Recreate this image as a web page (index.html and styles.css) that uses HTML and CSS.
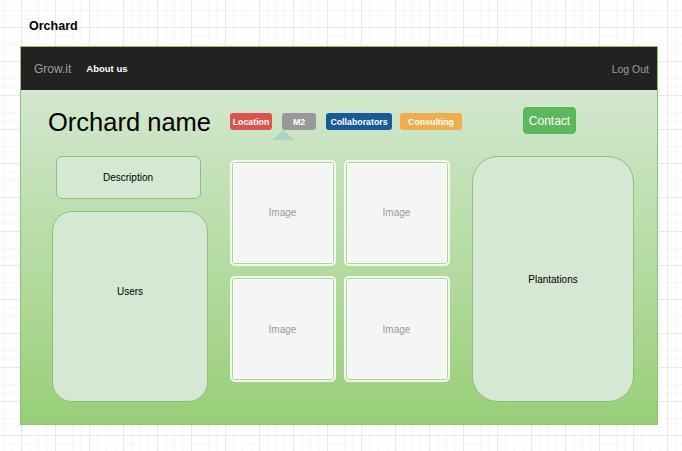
FILE: index.html
```html
<!DOCTYPE html>
<html lang="en">
<head>
<meta charset="utf-8">
<title>Orchard</title>
<link rel="stylesheet" href="styles.css">
</head>
<body>
<div class="page">
  <h1 class="page-title">Orchard</h1>
  <div class="frame">
    <nav class="navbar">
      <span class="brand">Grow.it</span>
      <a class="nav-link">About us</a>
      <span class="spacer"></span>
      <a class="nav-logout">Log Out</a>
    </nav>
    <main class="content">
      <header class="orchard-header">
        <h2 class="orchard-name">Orchard name</h2>
        <div class="badges">
          <span class="badge badge-location">Location</span>
          <span class="badge badge-m2">M2<span class="badge-arrow"></span></span>
          <span class="badge badge-collab">Collaborators</span>
          <span class="badge badge-consult">Consulting</span>
        </div>
        <button class="btn-contact">Contact</button>
      </header>
      <section class="columns">
        <div class="col-left">
          <div class="box box-desc">Description</div>
          <div class="box box-users">Users</div>
        </div>
        <div class="gallery">
          <div class="thumb">Image</div>
          <div class="thumb">Image</div>
          <div class="thumb">Image</div>
          <div class="thumb">Image</div>
        </div>
        <div class="box box-plantations">Plantations</div>
      </section>
    </main>
  </div>
</div>
</body>
</html>
```
FILE: styles.css
```css
html, body {
  margin: 0;
  padding: 0;
  height: 100%;
}
body {
  font-family: "Liberation Sans", Arial, sans-serif;
  background-color: #ffffff;
  background-image:
    linear-gradient(#e8e8e8 1px, transparent 1px),
    linear-gradient(90deg, #e8e8e8 1px, transparent 1px),
    linear-gradient(#f6f6f6 1px, transparent 1px),
    linear-gradient(90deg, #f6f6f6 1px, transparent 1px);
  background-size: 34px 34px, 34px 34px, 8.5px 8.5px, 8.5px 8.5px;
  background-position: 21px 27px, 21px 27px, 21px 27px, 21px 27px;
}
.page {
  padding: 0 0 0 20px;
}
.page-title {
  margin: 0;
  height: 46px;
  box-sizing: border-box;
  padding: 19px 0 0 9px;
  font-size: 12.5px;
  line-height: 14px;
  font-weight: bold;
  color: #000;
}
.frame {
  width: 638px;
  height: 379px;
  box-sizing: border-box;
  border: 1px solid #8fc078;
  display: flex;
  flex-direction: column;
}
.navbar {
  height: 43px;
  flex: none;
  background: #222222;
  display: flex;
  align-items: center;
  padding: 0 8px 0 13px;
}
.brand {
  font-size: 12px;
  color: #9d9d9d;
}
.nav-link {
  margin-left: 15px;
  font-size: 9.5px;
  font-weight: bold;
  color: #ffffff;
}
.spacer {
  flex: 1;
}
.nav-logout {
  font-size: 10.5px;
  color: #9d9d9d;
}
.content {
  flex: 1;
  background: linear-gradient(to bottom, #d3e8cf, #98cf77);
  padding: 17px 0 22px 0;
}
.orchard-header {
  display: flex;
  align-items: center;
  height: 27px;
  padding-left: 27px;
}
.orchard-name {
  margin: 3px 0 0 0;
  width: 182px;
  flex: none;
  font-size: 25.5px;
  line-height: 27px;
  font-weight: normal;
  color: #000;
}
.badges {
  display: flex;
  gap: 9px;
  padding-top: 2px;
}
.badge {
  position: relative;
  display: flex;
  align-items: center;
  justify-content: center;
  height: 17px;
  border-radius: 3px;
  font-size: 8.8px;
  font-weight: bold;
  color: #ffffff;
}
.badge-location { width: 42px; background: #d9534f; }
.badge-m2 { width: 34px; background: #999999; margin-left: 1px; }
.badge-collab { width: 66px; background: #175c98; margin-left: 1px; }
.badge-consult { width: 62px; background: #f0ad4e; margin-left: -1px; }
.badge-arrow {
  position: absolute;
  left: -10px;
  top: 17px;
  width: 0;
  height: 0;
  border-left: 11.5px solid transparent;
  border-right: 11.5px solid transparent;
  border-bottom: 10px solid #a9d4c6;
}
.btn-contact {
  margin-left: 61px;
  width: 53px;
  height: 27px;
  border: 1px solid #56b556;
  border-radius: 4px;
  background: #5cb85c;
  color: #ffffff;
  font-family: "Liberation Sans", Arial, sans-serif;
  font-size: 12px;
  padding: 0;
}
.columns {
  margin-top: 22px;
  height: 246px;
  padding-left: 31px;
  display: grid;
  grid-template-columns: 156px 221px 162px;
  column-gap: 21.5px;
}
.col-left {
  display: flex;
  flex-direction: column;
  gap: 11.5px;
}
.box {
  box-sizing: border-box;
  background: #d5e8d4;
  border: 1px solid #93bf7d;
  display: flex;
  align-items: center;
  justify-content: center;
  font-size: 10px;
  color: #000;
}
.box-desc {
  width: 145px;
  height: 43px;
  margin-left: 3.5px;
  border-radius: 6px;
}
.box-users {
  flex: 1;
  border-radius: 20px;
  padding-bottom: 30px;
}
.box-plantations {
  border-radius: 26px;
}
.gallery {
  padding-top: 3.5px;
  display: grid;
  grid-template-columns: 106px 106px;
  grid-template-rows: 106px 106px;
  column-gap: 8px;
  row-gap: 10.5px;
}
.thumb {
  box-sizing: border-box;
  border: 2px solid #f2f9ee;
  border-radius: 5px;
  background: #f5f5f5;
  box-shadow: inset 0 0 0 1px #a8d58f, inset 0 0 0 2px #ffffff;
  display: flex;
  align-items: center;
  justify-content: center;
  font-size: 10px;
  color: #9a9a9a;
}
```
